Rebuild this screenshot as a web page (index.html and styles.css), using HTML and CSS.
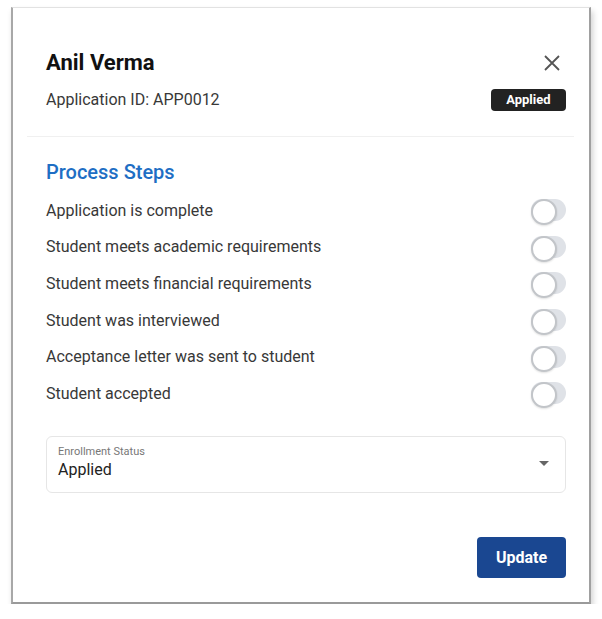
FILE: index.html
```html
<!DOCTYPE html>
<html>
<head>
<meta charset="utf-8">
<link rel="stylesheet" href="styles.css">
</head>
<body>
<div class="card">
  <div class="header">
    <div class="row">
      <h1 class="title">Anil Verma</h1>
      <svg class="close" width="18" height="18" viewBox="0 0 18 18"><path d="M2 2 L16 16 M16 2 L2 16" stroke="#555" stroke-width="1.8" fill="none"/></svg>
    </div>
    <div class="row sub">
      <span class="appid">Application ID: APP0012</span>
      <span class="badge">Applied</span>
    </div>
  </div>
  <div class="divider"></div>
  <div class="body">
    <h2 class="section">Process Steps</h2>
    <ul class="steps">
      <li><span>Application is complete</span><span class="toggle"></span></li>
      <li><span>Student meets academic requirements</span><span class="toggle"></span></li>
      <li><span>Student meets financial requirements</span><span class="toggle"></span></li>
      <li><span>Student was interviewed</span><span class="toggle"></span></li>
      <li><span>Acceptance letter was sent to student</span><span class="toggle"></span></li>
      <li><span>Student accepted</span><span class="toggle"></span></li>
    </ul>
    <div class="select">
      <div class="select-text">
        <div class="select-label">Enrollment Status</div>
        <div class="select-value">Applied</div>
      </div>
      <svg class="caret" width="10" height="6" viewBox="0 0 10 6"><path d="M0 0 L10 0 L5 5 Z" fill="#666"/></svg>
    </div>
    <div class="actions">
      <button class="btn">Update</button>
    </div>
  </div>
</div>
</body>
</html>
```
FILE: styles.css
```css
* { box-sizing: border-box; }
html, body { margin: 0; padding: 0; background: #fff; }
body {
  font-family: Roboto, "Liberation Sans", sans-serif;
  color: #222;
  padding: 7px 0 0 11px;
}
.card {
  width: 580px;
  height: 597px;
  background: #fff;
  border-top: 1px solid #e2e2e2;
  border-left: 2px solid #a8a8a8;
  border-right: 2px solid #a0a0a0;
  border-bottom: 2px solid #9a9a9a;
  box-shadow: 2px 4px 6px rgba(0,0,0,0.18);
  display: flex;
  flex-direction: column;
}
.header {
  padding: 40px 23px 0 33px;
}
.row {
  display: flex;
  justify-content: space-between;
  align-items: center;
}
.title {
  margin: 0;
  font-size: 22px;
  font-weight: 700;
  line-height: 30px;
  color: #111;
}
.close { margin-right: 5px; }
.sub { margin-top: 11px; }
.appid {
  font-size: 16px;
  color: #383838;
  line-height: 22px;
}
.badge {
  background: #222;
  color: #fff;
  font-weight: 700;
  font-size: 13px;
  line-height: 22px;
  padding: 0 15.5px;
  border-radius: 4px;
}
.divider {
  height: 1px;
  background: #f0f0f0;
  margin: 25px 15px 0 14px;
}
.body {
  padding: 21px 23px 0 33px;
  flex: 1;
  display: flex;
  flex-direction: column;
}
.section {
  margin: 0;
  font-size: 20px;
  font-weight: 500;
  line-height: 28px;
  color: #1e6ec4;
}
.steps {
  list-style: none;
  margin: 6px 0 0;
  padding: 0;
}
.steps li {
  display: flex;
  justify-content: space-between;
  align-items: center;
  height: 36.6px;
  font-size: 16px;
  color: #383838;
}
.toggle {
  position: relative;
  width: 35px;
  height: 22px;
  border-radius: 11px;
  background: #dfe2e7;
}
.toggle::before {
  content: "";
  position: absolute;
  left: 0;
  top: 0;
  width: 22px;
  height: 22px;
  border-radius: 50%;
  background: #fff;
  border: 2px solid #c2c5c9;
  box-shadow: 0 1px 2px rgba(0,0,0,0.12);
}
.select {
  margin-top: 24px;
  height: 57px;
  border: 1px solid #e6e6e6;
  border-radius: 6px;
  display: flex;
  align-items: center;
  justify-content: space-between;
  padding: 0 16px 0 11px;
}
.select-label {
  font-size: 11px;
  color: #777;
  line-height: 13px;
  margin-top: -3px;
}
.select-value {
  font-size: 16px;
  color: #222;
  line-height: 20px;
  margin-top: 2px;
}
.actions {
  margin-top: 44px;
  display: flex;
  justify-content: flex-end;
}
.btn {
  font-family: Roboto, "Liberation Sans", sans-serif;
  background: #1a4791;
  color: #fff;
  border: none;
  border-radius: 4px;
  font-size: 16px;
  font-weight: 700;
  width: 89px;
  height: 41px;
}
```
